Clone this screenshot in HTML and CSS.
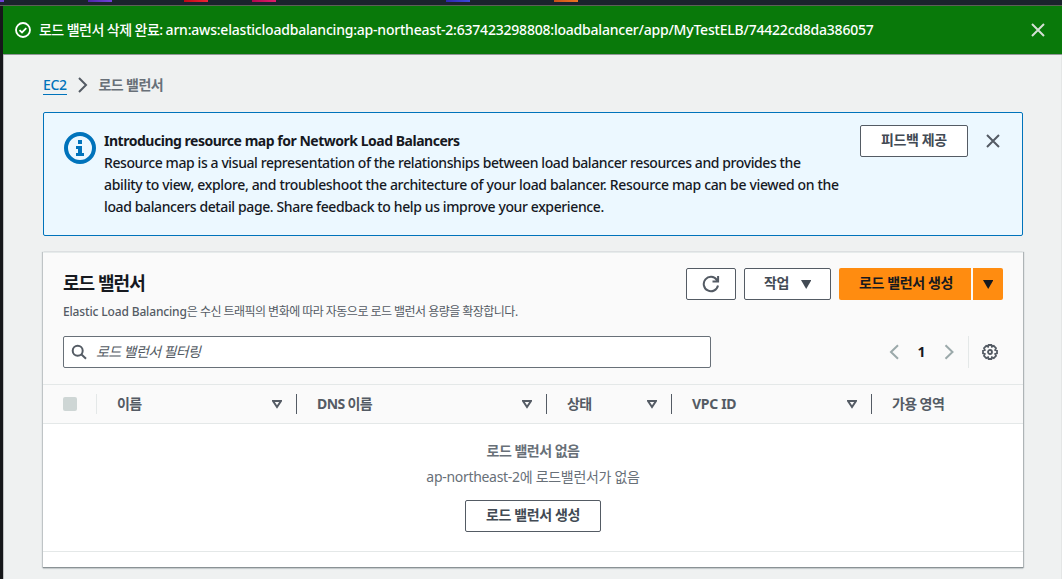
FILE: index.html
```html
<!DOCTYPE html>
<html lang="ko">
<head>
<meta charset="utf-8">
<title>로드 밸런서 | EC2</title>
<link rel="stylesheet" href="styles.css">
</head>
<body>
<div class="topbar"><i class="svc violet first"></i><i class="svc violet"></i><i class="svc red"></i><i class="svc pink"></i><i class="svc blue"></i><i class="svc orange"></i></div>
<div class="shell">
  <div class="rail"></div>
  <div class="content">
    <div class="flash">
      <svg class="flash-icon" width="16" height="16" viewBox="0 0 16 16"><circle cx="8" cy="8" r="7"/><path d="M4.5 8.2l2.5 2.3 4.3-4.3"/></svg>
      <p class="flash-text"><span class="ko-flash">로드 밸런서 삭제 완료: </span><span class="arn">arn:aws:elasticloadbalancing:ap-northeast-2:637423298808:loadbalancer/app/MyTestELB/74422cd8da386057</span></p>
      <svg class="close light" width="16" height="16" viewBox="0 0 16 16"><path d="M2 2l12 12M14 2L2 14"/></svg>
    </div>
    <main>
      <nav class="crumbs">
        <a class="crumb-link">EC2</a>
        <svg class="chev" width="16" height="16" viewBox="0 0 16 16"><path d="M4 1l7 7-7 7"/></svg>
        <span class="crumb-here">로드 밸런서</span>
      </nav>
      <section class="info">
        <svg class="info-icon" width="32" height="32" viewBox="0 0 32 32"><circle cx="16" cy="16" r="14"/><path d="M14 8h4v4h-4zM12 14h6v7h2v3h-8v-3h2v-4h-2z"/></svg>
        <div class="info-body">
          <h2>Introducing resource map for Network Load Balancers</h2>
          <p><span class="l1">Resource map is a visual representation of the relationships between load balancer resources and provides the</span><br><span class="l2">ability to view, explore, and troubleshoot the architecture of your load balancer. Resource map can be viewed on the</span><br><span class="l3">load balancers detail page. Share feedback to help us improve your experience.</span></p>
        </div>
        <button class="btn feedback">피드백 제공</button>
        <svg class="close" width="16" height="16" viewBox="0 0 16 16"><path d="M2 2l12 12M14 2L2 14"/></svg>
      </section>
      <section class="panel">
        <header class="panel-head">
          <div class="title-row">
            <div class="titles">
              <h1>로드 밸런서</h1>
              <p class="desc"><span class="desc-en">Elastic Load Balancing</span><span class="desc-ko">은 수신 트래픽의 변화에 따라 자동으로 로드 밸런서 용량을 확장합니다.</span></p>
            </div>
            <div class="actions">
              <button class="btn refresh"><svg width="18" height="18" viewBox="0 0 18 18"><path d="M16 10.500A7.200 7.200 0 1 1 14.800 4.800L16 6.500M10.500 6.500h5.600V1"/></svg></button>
              <button class="btn action">작업<svg width="10" height="9" viewBox="0 0 10 9"><path d="M0 0h10.500L5.200 9z"/></svg></button>
              <div class="split"><button class="btn primary">로드 밸런서 생성</button><button class="btn primary more"><svg width="10" height="9" viewBox="0 0 10 9"><path d="M0 0h10.500L5.200 9z"/></svg></button></div>
            </div>
          </div>
          <div class="filter-row">
            <div class="search"><svg width="16" height="16" viewBox="0 0 16 16"><circle cx="6.700" cy="6.700" r="5"/><path d="M10.500 10.500l4.500 4.200"/></svg><span>로드 밸런서 필터링</span></div>
            <div class="pager">
              <svg width="16" height="16" viewBox="0 0 16 16"><path d="M12 1.200L5 8l7 6.800"/></svg>
              <b>1</b>
              <svg width="16" height="16" viewBox="0 0 16 16"><path d="M4.500 1.200l7 6.800-7 6.800"/></svg>
              <div class="gear"><svg width="16" height="16" viewBox="0 0 16 16"><path d="M6.600 1h2.800l.5 1.700 1.900-.8 2.200 2.200-.8 1.900 1.800.6v2.800l-1.800.6.8 1.900-2.200 2.200-1.900-.8-.5 1.700H6.600l-.5-1.700-1.900.8L2 11.900l.8-1.900L1 9.400V6.600L2.800 6 2 4.100l2.200-2.200 1.900.8z"/><circle cx="8" cy="8" r="2"/></svg></div>
            </div>
          </div>
        </header>
        <div class="thead">
          <div class="th check"><i></i></div>
          <div class="th dark"><span>이름</span><svg class="sort" width="10" height="9" viewBox="0 0 10 9"><path d="M1 1h8L5 7z"/></svg></div>
          <div class="th dark"><span>DNS 이름</span><svg class="sort" width="10" height="9" viewBox="0 0 10 9"><path d="M1 1h8L5 7z"/></svg></div>
          <div class="th dark"><span>상태</span><svg class="sort" width="10" height="9" viewBox="0 0 10 9"><path d="M1 1h8L5 7z"/></svg></div>
          <div class="th dark"><span class="vpc">VPC ID</span><svg class="sort" width="10" height="9" viewBox="0 0 10 9"><path d="M1 1h8L5 7z"/></svg></div>
          <div class="th"><span>가용 영역</span></div>
        </div>
        <div class="empty">
          <strong>로드 밸런서 없음</strong>
          <p><span class="region">ap-northeast-2</span>에 로드밸런서가 없음</p>
          <button class="btn">로드 밸런서 생성</button>
        </div>
      </section>
    </main>
  </div>
</div>
</body>
</html>
```

FILE: styles.css
```css
* { box-sizing: border-box; }
body { margin: 0; width: 1062px; height: 579px; overflow: hidden; background: #eff1f1; color: #16191f; font: 14px/22px "Noto Sans", "Noto Sans CJK KR", sans-serif; display: flex; flex-direction: column; }
h1, h2, p { margin: 0; }
svg { display: block; flex: none; fill: none; stroke: #545b64; stroke-width: 2; }
.topbar { height: 6px; flex: none; background: #1b232d; border-bottom: 1px solid #5d5f58; display: flex; align-items: flex-start; }
.svc { width: 24px; height: 2px; flex: none; }
.first { width: 4px; margin-right: 84px; }
.violet { background: linear-gradient(90deg, #4d27a8, #6f42d8); }
.red { margin-left: 72px; background: linear-gradient(90deg, #bd0816, #ee2334); }
.pink { margin-left: 44px; background: linear-gradient(90deg, #b0084d, #df1d6b); }
.blue { margin-left: 170px; background: linear-gradient(90deg, #2e27ad, #3b4ad8); }
.orange { margin-left: 84px; background: linear-gradient(90deg, #c8511b, #ec7422); }
.first.violet { background: #6f42d8; }
.shell { display: flex; flex: 1; min-height: 0; }
.rail { width: 4px; background: #16171a; border-right: 1px solid #bfc1c2; }
.content { flex: 1; min-width: 0; margin-left: -1px; }
.flash { height: 49px; display: flex; align-items: center; background: #09790a; border-bottom: 1px solid #919798; padding: 0 16px 1px 12px; color: #fff; }
.flash-icon { stroke: #fff; stroke-width: 1.8; margin-right: 8px; }
.flash-text { flex: 1; white-space: nowrap; font-weight: 500; }
.ko-flash { letter-spacing: -.55px; }
.arn { letter-spacing: -.21px; }
.close { stroke: #545b64; }
.close.light { stroke: #d5dfd5; }
main { height: 524px; padding: 19px 38px 0 40px; border-right: 1px solid #e4e6e6; }
.crumbs { display: flex; align-items: center; height: 22px; }
.crumb-link { color: #0073bb; line-height: 19px; height: 20px; border-bottom: 1px solid #0073bb; font-weight: 500; letter-spacing: -.4px; }
.chev { margin: 0 8px; }
.crumb-here { color: #687078; font-weight: 600; letter-spacing: -.6px; }
.info { display: flex; margin-top: 16px; height: 124px; border: 1px solid #0073bb; border-radius: 2px; background: #ecf8ff; padding: 12px 21px 0 20px; }
.info-icon { margin-top: 7px; stroke: #0073bb; stroke-width: 4; }
.info-icon path { fill: #0073bb; stroke: none; }
.info-body { flex: 1; min-width: 0; padding: 5px 0 0 8px; white-space: nowrap; font-weight: 500; }
.info-body h2 { font-size: 14px; line-height: 22px; font-weight: 700; letter-spacing: -.48px; }
.l1 { letter-spacing: -.405px; }
.l2 { letter-spacing: -.343px; }
.l3 { letter-spacing: -.385px; }
.btn { height: 32px; border: 1px solid #545b64; border-radius: 2px; background: #fff; color: #424a54; font: 700 14px/20px "Noto Sans", "Noto Sans CJK KR", sans-serif; letter-spacing: -.38px; padding: 0 19px 2px; white-space: nowrap; }
.feedback { width: 108px; }
.info .close { margin: 8px 0 0 17px; }
.panel { margin-top: 16px; width: 980px; height: 316px; background: #fff; border-top: 1px solid #e6ebeb; border-bottom: 1px solid #8a9295; box-shadow: 1px 0 1px #aeb4b6, -1px 0 1px #bfc4c6, 0 1px 1px #cfd3d4; }
.panel-head { height: 132px; background: #fafafa; padding: 15px 20px 0; border-bottom: 1px solid #e4e8e8; }
.title-row { display: flex; justify-content: space-between; height: 68px; }
.titles { padding-top: 1px; }
h1 { font-size: 18px; line-height: 28px; font-weight: 700; letter-spacing: -.95px; }
.desc { font-size: 12px; line-height: 18px; margin-top: 6px; color: #545b64; white-space: nowrap; }
.desc-en { letter-spacing: -.15px; font-weight: 500; }
.desc-ko { letter-spacing: -.53px; }
.actions { display: flex; gap: 8px; }
.refresh { width: 50px; padding: 0 0 0 15px; }
.action { width: 87px; display: flex; align-items: center; gap: 12px; }
.action svg, .more svg { margin-top: 2px; stroke: none; fill: #424a54; }
.split { display: flex; gap: 2px; }
.primary { width: 132px; border: 0; background: #ff8c10; color: #16191f; border-radius: 2px 0 0 2px; padding: 0 0 2px 2px; }
.more { width: 30px; padding-left: 10px; border-radius: 0 2px 2px 0; }
.more svg { fill: #16191f; }
.filter-row { display: flex; justify-content: space-between; }
.search { width: 648px; height: 32px; border: 1px solid #687078; border-radius: 2px; background: #fff; display: flex; align-items: center; padding: 0 8px 1px 7px; gap: 9px; color: #545b64; font-style: italic; letter-spacing: -.6px; }
.pager { display: flex; align-items: center; height: 32px; }
.pager > svg { stroke: #9ba9aa; }
.pager b { width: 39px; text-align: center; font-size: 14px; }
.gear { margin-left: 11px; border-left: 1px solid #e4e8e8; height: 32px; padding: 8px 5px 0 13px; }
.gear svg { stroke-width: 1.8; }
.thead { display: grid; grid-template-columns: 54px 200px 250px 125px 200px 1fr; height: 39px; background: #fafafa; border-bottom: 1px solid #e4e8e8; align-items: center; }
.th { height: 20px; display: flex; align-items: center; justify-content: space-between; padding: 0 14px 0 20px; color: #545b64; font-weight: 700; letter-spacing: -.6px; }
.th .vpc { letter-spacing: -.3px; }
.dark { border-right: 1px solid #545b64; }
.check { border-right: 1px solid #e4e8e8; }
.check i { width: 14px; height: 14px; background: #ced6d5; border-radius: 2px; flex: none; }
.sort { margin-top: 1px; }
.empty { height: 128px; border-bottom: 1px solid #e4e8e8; display: flex; flex-direction: column; align-items: center; padding-top: 16px; color: #687078; }
.empty strong { letter-spacing: -.5px; }
.empty p { margin: 4px 0 12px; letter-spacing: -.3px; }
.empty .btn { width: 136px; padding: 0 0 2px; flex: none; }
```
